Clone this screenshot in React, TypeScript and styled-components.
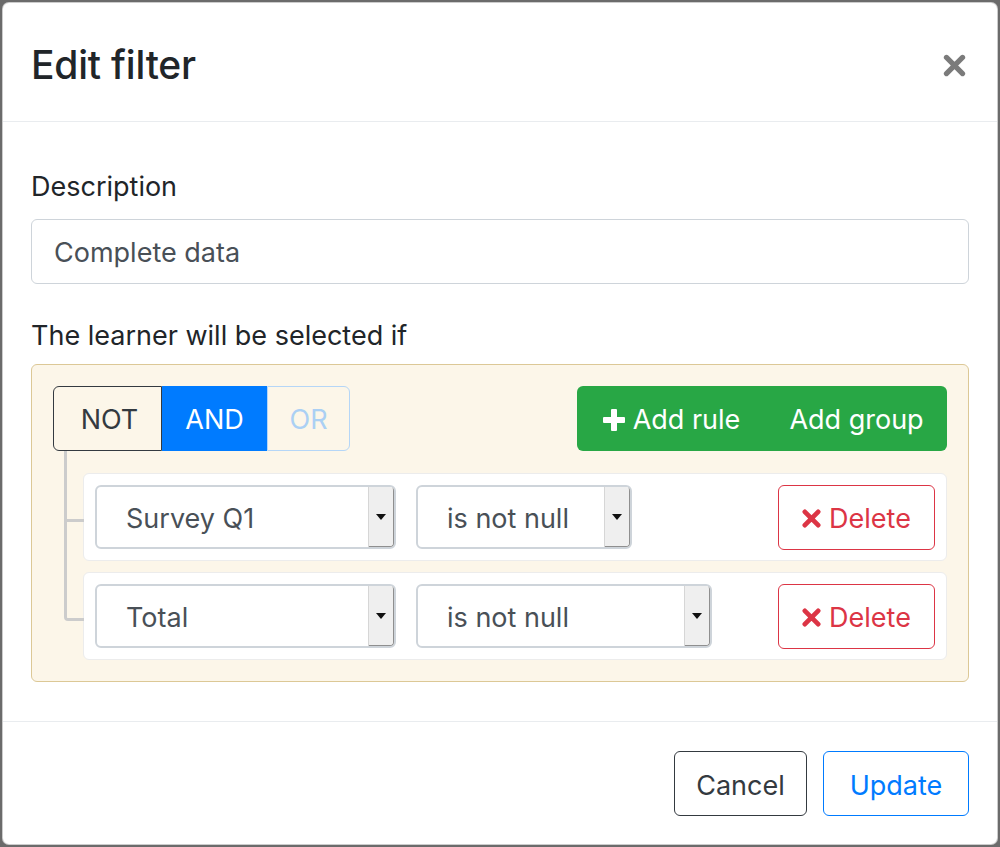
import React from "react";
import styled, { createGlobalStyle } from "styled-components";

const GlobalStyle = createGlobalStyle`
  html, body { margin: 0; padding: 0; }
  body {
    background: #6b6b6b;
    font-family: Inter, "Noto Sans", "Liberation Sans", sans-serif;
    color: #212529;
  }
  * { box-sizing: border-box; }
`;

const Page = styled.div`
  width: 1000px;
  height: 847px;
  padding: 2px;
`;

const Modal = styled.div`
  width: 996px;
  height: 843px;
  background: #fff;
  border: 1px solid rgba(0, 0, 0, 0.2);
  border-radius: 7px;
  display: flex;
  flex-direction: column;
`;

const Header = styled.div`
  height: 119px;
  padding: 0 28px;
  display: flex;
  align-items: center;
  justify-content: space-between;
  border-bottom: 1px solid #e9ecef;
`;

const Title = styled.h5`
  margin: 0;
  margin-top: 6px;
  font-size: 39px;
  font-weight: 500;
  line-height: 1.2;
  color: #212529;
  letter-spacing: -0.2px;
`;

const Close = styled.button`
  border: none;
  background: none;
  padding: 0;
  margin-right: 3px;
  margin-top: 6px;
  color: #7b7b7b;
  display: flex;
  align-items: center;
`;

const Body = styled.div`
  padding: 47px 28px 36px;
  flex: 1;
`;

const Label = styled.div<{ $top?: number }>`
  font-size: 27px;
  line-height: 36px;
  margin-top: ${(p) => p.$top ?? 0}px;
  margin-bottom: ${(p) => (p.$top ? 10 : 14)}px;
  color: #212529;
`;

const Input = styled.div`
  height: 65px;
  border: 1px solid #ced4da;
  border-radius: 6px;
  padding: 2px 22px 0;
  display: flex;
  align-items: center;
  font-size: 27px;
  color: #495057;
`;

const Group = styled.div`
  border: 1px solid #dcc896;
  background: #fcf6e9;
  border-radius: 6px;
  padding: 21px;
`;

const GroupHeader = styled.div`
  display: flex;
  justify-content: space-between;
  height: 65px;
`;

const BtnGroup = styled.div`
  display: flex;
`;

const Toggle = styled.div<{ $kind: "dark" | "active" | "faded"; $w: number; $pos: "first" | "mid" | "last" }>`
  width: ${(p) => p.$w}px;
  height: 65px;
  padding-top: 2px;
  display: flex;
  align-items: center;
  justify-content: center;
  font-size: 27px;
  border: 1px solid;
  border-radius: ${(p) => (p.$pos === "first" ? "6px 0 0 6px" : p.$pos === "last" ? "0 6px 6px 0" : "0")};
  ${(p) =>
    p.$kind === "dark"
      ? "border-color:#343a40;color:#343a40;background:transparent;padding-left:4px;"
      : p.$kind === "active"
      ? "border-color:#007bff;color:#fff;background:#007bff;"
      : "border-color:#b5d6f7;color:#abd0f4;background:transparent;"}
`;

const GreenBtn = styled.div<{ $w: number; $pos: "first" | "last" }>`
  width: ${(p) => p.$w}px;
  height: 65px;
  padding-top: 2px;
  background: #28a745;
  color: #fff;
  font-size: 27px;
  display: flex;
  align-items: center;
  justify-content: center;
  gap: 8px;
  border-radius: ${(p) => (p.$pos === "first" ? "6px 0 0 6px" : "0 6px 6px 0")};
`;

const RulesList = styled.div`
  margin-top: 22px;
  padding-left: 30px;
  display: flex;
  flex-direction: column;
  gap: 11px;
`;

const Rule = styled.div<{ $last?: boolean }>`
  height: 88px;
  background: #fff;
  border: 1px solid #ececec;
  border-radius: 6px;
  padding: 0 11px 0 11px;
  display: flex;
  align-items: center;
  gap: 20px;
  position: relative;

  &::before {
    content: "";
    position: absolute;
    left: -20px;
    width: 17px;
    top: ${(p) => (p.$last ? "-22px" : "-23px")};
    height: ${(p) => (p.$last ? "67px" : "68px")};
    border-left: 3px solid #cccccc;
    border-bottom: 3px solid #cccccc;
    border-bottom-left-radius: ${(p) => (p.$last ? "4px" : "0")};
  }
  &::after {
    content: "";
    display: ${(p) => (p.$last ? "none" : "block")};
    position: absolute;
    left: -20px;
    top: 45px;
    height: 60px;
    border-left: 3px solid #cccccc;
  }
`;

const Select = styled.div<{ $w: number }>`
  width: ${(p) => p.$w}px;
  height: 64px;
  border: 2px solid #ced4da;
  border-radius: 6px;
  display: flex;
  align-items: stretch;
  font-size: 27px;
  color: #495057;
  overflow: hidden;
  background: #fff;
`;

const SelectText = styled.div`
  flex: 1;
  padding: 2px 0 0 29px;
  display: flex;
  align-items: center;
`;

const Arrow = styled.div`
  width: 28px;
  margin: -2px -2px -2px 0;
  background: #efefef;
  border-left: 1px solid #d6d6d6;
  border-top: 2px solid #dcdcdc;
  border-right: 3px solid #8f8f8f;
  border-bottom: 3px solid #8f8f8f;
  border-top-right-radius: 5px;
  border-bottom-right-radius: 5px;
  display: flex;
  align-items: center;
  justify-content: center;
`;

const Spacer = styled.div`
  flex: 1;
`;

const DeleteBtn = styled.div`
  width: 157px;
  height: 65px;
  padding-top: 2px;
  border: 1px solid #dc3545;
  border-radius: 6px;
  color: #dc3545;
  font-size: 27px;
  display: flex;
  align-items: center;
  justify-content: center;
  gap: 8px;
`;

const Footer = styled.div`
  border-top: 1px solid #e9ecef;
  padding: 29px 28px 28px;
  display: flex;
  justify-content: flex-end;
  gap: 16px;
`;

const FooterBtn = styled.div<{ $w: number; $primary?: boolean }>`
  width: ${(p) => p.$w}px;
  height: 65px;
  padding-top: 3px;
  border: 1px solid ${(p) => (p.$primary ? "#007bff" : "#343a40")};
  color: ${(p) => (p.$primary ? "#007bff" : "#343a40")};
  border-radius: 6px;
  font-size: 27px;
  display: flex;
  align-items: center;
  justify-content: center;
`;

const Caret = () => (
  <svg width="10" height="6" viewBox="0 0 10 6">
    <path d="M0 0 L10 0 L5 6 Z" fill="#111" />
  </svg>
);

const Plus = () => (
  <svg width="22" height="22" viewBox="0 0 22 22">
    <rect x="8" y="0" width="6" height="22" rx="1" fill="#fff" />
    <rect x="0" y="8" width="22" height="6" rx="1" fill="#fff" />
  </svg>
);

const XIcon = ({ color, size, w }: { color: string; size: number; w: number }) => (
  <svg width={size} height={size} viewBox="0 0 20 20">
    <path d="M3 3 L17 17 M17 3 L3 17" stroke={color} strokeWidth={w} strokeLinecap="round" />
  </svg>
);

const RuleRow = ({ field, fw, ow, last }: { field: string; fw: number; ow: number; last?: boolean }) => (
  <Rule $last={last}>
    <Select $w={fw}>
      <SelectText>{field}</SelectText>
      <Arrow>
        <Caret />
      </Arrow>
    </Select>
    <Select $w={ow}>
      <SelectText>is not null</SelectText>
      <Arrow>
        <Caret />
      </Arrow>
    </Select>
    <Spacer />
    <DeleteBtn>
      <XIcon color="#dc3545" size={19} w={5} />
      Delete
    </DeleteBtn>
  </Rule>
);

export default function App() {
  return (
    <>
      <GlobalStyle />
      <Page>
        <Modal>
          <Header>
            <Title>Edit filter</Title>
            <Close aria-label="Close">
              <XIcon color="#7b7b7b" size={23} w={4.5} />
            </Close>
          </Header>
          <Body>
            <Label>Description</Label>
            <Input>Complete data</Input>
            <Label $top={34}>The learner will be selected if</Label>
            <Group>
              <GroupHeader>
                <BtnGroup>
                  <Toggle $kind="dark" $w={109} $pos="first">NOT</Toggle>
                  <Toggle $kind="active" $w={105} $pos="mid">AND</Toggle>
                  <Toggle $kind="faded" $w={83} $pos="last">OR</Toggle>
                </BtnGroup>
                <BtnGroup>
                  <GreenBtn $w={189} $pos="first">
                    <Plus />
                    Add rule
                  </GreenBtn>
                  <GreenBtn $w={181} $pos="last">Add group</GreenBtn>
                </BtnGroup>
              </GroupHeader>
              <RulesList>
                <RuleRow field="Survey Q1" fw={301} ow={216} />
                <RuleRow field="Total" fw={301} ow={296} last />
              </RulesList>
            </Group>
          </Body>
          <Footer>
            <FooterBtn $w={133}>Cancel</FooterBtn>
            <FooterBtn $w={146} $primary>Update</FooterBtn>
          </Footer>
        </Modal>
      </Page>
    </>
  );
}
